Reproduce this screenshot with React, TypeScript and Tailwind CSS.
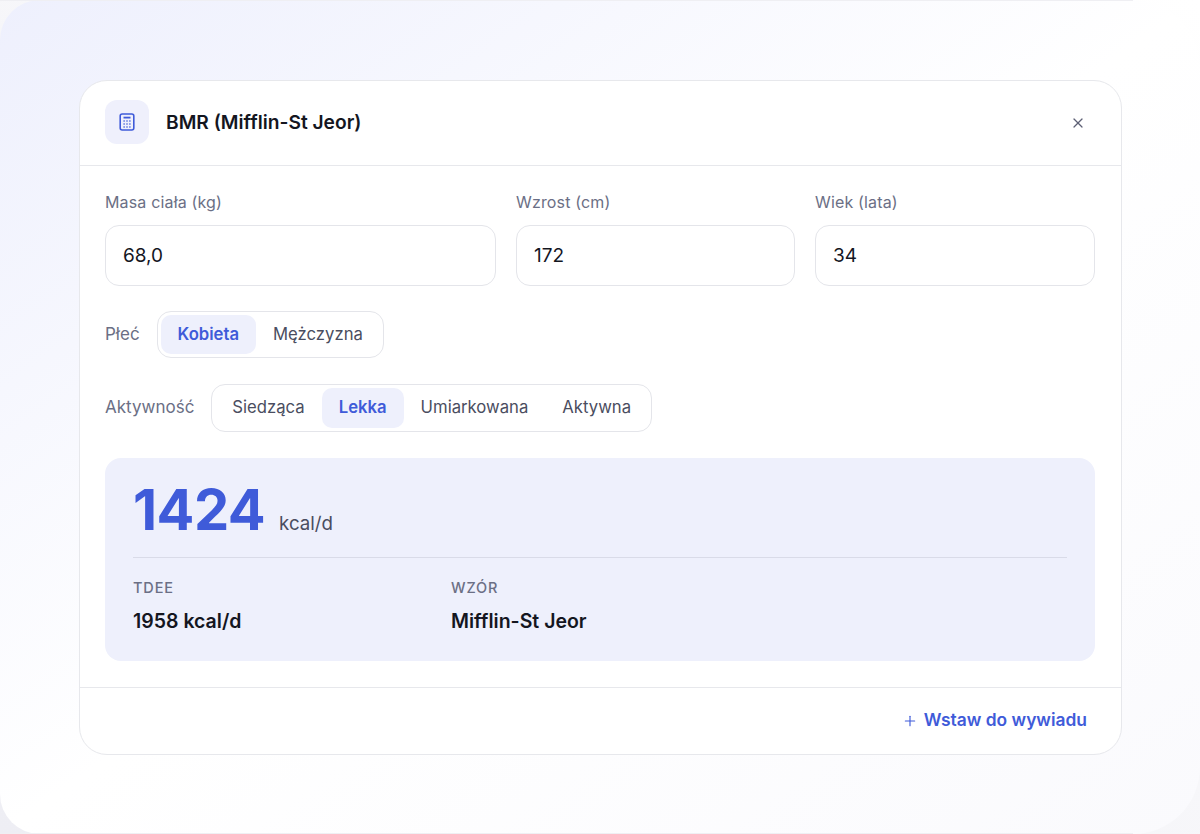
import React from 'react';
import { Plus, X } from 'lucide-react';

function CalculatorIcon() {
  return (
    <svg width="16" height="18" viewBox="0 0 16 18" fill="none" stroke="#3F5BD9" strokeWidth="1.6">
      <rect x="1.2" y="1" width="13.6" height="16" rx="2" />
      <path d="M4.5 4.6h7" strokeWidth="1.8" />
      <path
        d="M4.5 8h1.2M7.4 8h1.2M10.3 8h1.2M4.5 11h1.2M7.4 11h1.2M10.3 11h1.2M4.5 14h1.2M7.4 14h1.2M10.3 14h1.2"
        strokeWidth="1.5"
      />
    </svg>
  );
}

function Field({ label, value, className }: { label: string; value: string; className: string }) {
  return (
    <div className={className}>
      <div className="text-[16px] leading-[18px] tracking-[0.01em] text-[#6B6F85]">{label}</div>
      <div className="mt-[14px] h-[61px] rounded-[14px] border border-[#E4E5EA] bg-white px-[17px] pt-[2px] flex items-center text-[19px] text-[#14161F]">
        {value}
      </div>
    </div>
  );
}

function Segment({ label, active }: { label: string; active?: boolean }) {
  return (
    <div
      className={
        active
          ? 'h-full px-[17px] rounded-[10px] bg-[#EEF0FC] flex items-center text-[16.7px] font-semibold text-[#3F5BD9]'
          : 'h-full px-[17px] rounded-[10px] flex items-center text-[16.7px] text-[#4A4D60]'
      }
    >
      {label}
    </div>
  );
}

function Stat({ label, value, className }: { label: string; value: string; className: string }) {
  return (
    <div className={className}>
      <div className="text-[14.5px] leading-[17px] font-medium tracking-[0.06em] text-[#6B6F85]">{label}</div>
      <div className="mt-[13px] text-[19.5px] leading-[24px] font-semibold text-[#14161F]">{value}</div>
    </div>
  );
}

export default function App() {
  return (
    <div className="h-[834px] w-[1200px] overflow-hidden bg-gradient-to-tr from-[#EEEEF4] to-white font-['Inter',sans-serif]">
      <div className="h-full flex flex-col rounded-tl-[40px] rounded-bl-[40px] rounded-tr-[67px] rounded-br-[67px] bg-gradient-to-br from-[#EEF0FD] via-white to-[#FAFAFD]">
        <div className="h-px w-[1133px] shrink-0 bg-[#EFEFF3]" />
        <div className="flex-1 pl-[79px] pr-[78px] pt-[79px]">
          {/* Card */}
          <div className="h-[675px] rounded-[28px] border border-[#E7E8EC] bg-white flex flex-col">
            {/* Header */}
            <div className="h-[85px] shrink-0 border-b border-[#E7E8EC] pl-[25px] pr-[35px] flex items-center">
              <div className="w-[44px] h-[44px] mb-[2px] rounded-[12px] bg-[#EFF0FC] flex items-center justify-center">
                <CalculatorIcon />
              </div>
              <div className="ml-[17px] mb-[1px] text-[19.2px] font-semibold text-[#14161F]">BMR (Mifflin-St Jeor)</div>
              <X className="ml-auto mb-[1px] w-[16px] h-[16px] text-[#5D6075]" strokeWidth={1.8} />
            </div>

            {/* Body */}
            <div className="flex-1 pl-[25px] pr-[26px] pt-[27px]">
              <div className="flex gap-[20px]">
                <Field label="Masa ciała (kg)" value="68,0" className="w-[391px]" />
                <Field label="Wzrost (cm)" value="172" className="w-[279px]" />
                <Field label="Wiek (lata)" value="34" className="flex-1" />
              </div>

              <div className="mt-[25px] flex items-center gap-[17px]">
                <span className="text-[17px] text-[#6B6F85]">Płeć</span>
                <div className="h-[47px] p-[3px] rounded-[14px] border border-[#E4E5EA] flex">
                  <Segment label="Kobieta" active />
                  <Segment label="Mężczyzna" />
                </div>
              </div>

              <div className="mt-[26px] flex items-center gap-[17px]">
                <span className="text-[17px] text-[#6B6F85]">Aktywność</span>
                <div className="h-[48px] p-[3px] rounded-[14px] border border-[#E4E5EA] flex">
                  <Segment label="Siedząca" />
                  <Segment label="Lekka" active />
                  <Segment label="Umiarkowana" />
                  <Segment label="Aktywna" />
                </div>
              </div>

              {/* Result */}
              <div className="mt-[26px] h-[203px] rounded-[16px] bg-[#EEF0FC] px-[28px] pt-[19px]">
                <div className="h-[81px] border-b border-[#D9DBE8] flex items-baseline">
                  <span className="text-[56px] leading-[66px] font-bold tracking-[-0.01em] text-[#3F5BD9]">1424</span>
                  <span className="ml-[14px] text-[18.7px] text-[#4A4D60]">kcal/d</span>
                </div>
                <div className="mt-[21px] flex">
                  <Stat label="TDEE" value="1958 kcal/d" className="w-[318px]" />
                  <Stat label="WZÓR" value="Mifflin-St Jeor" className="flex-1" />
                </div>
              </div>
            </div>

            {/* Footer */}
            <div className="h-[67px] shrink-0 border-t border-[#E7E8EC] pr-[34px] pb-[1px] flex items-center justify-end">
              <Plus className="w-[16px] h-[16px] text-[#3F5BD9]" strokeWidth={1.7} />
              <span className="ml-[6px] text-[17.4px] font-semibold text-[#3F5BD9]">Wstaw do wywiadu</span>
            </div>
          </div>
        </div>
        <div className="h-px w-[1133px] shrink-0 bg-[#EFEFF3]" />
      </div>
    </div>
  );
}
